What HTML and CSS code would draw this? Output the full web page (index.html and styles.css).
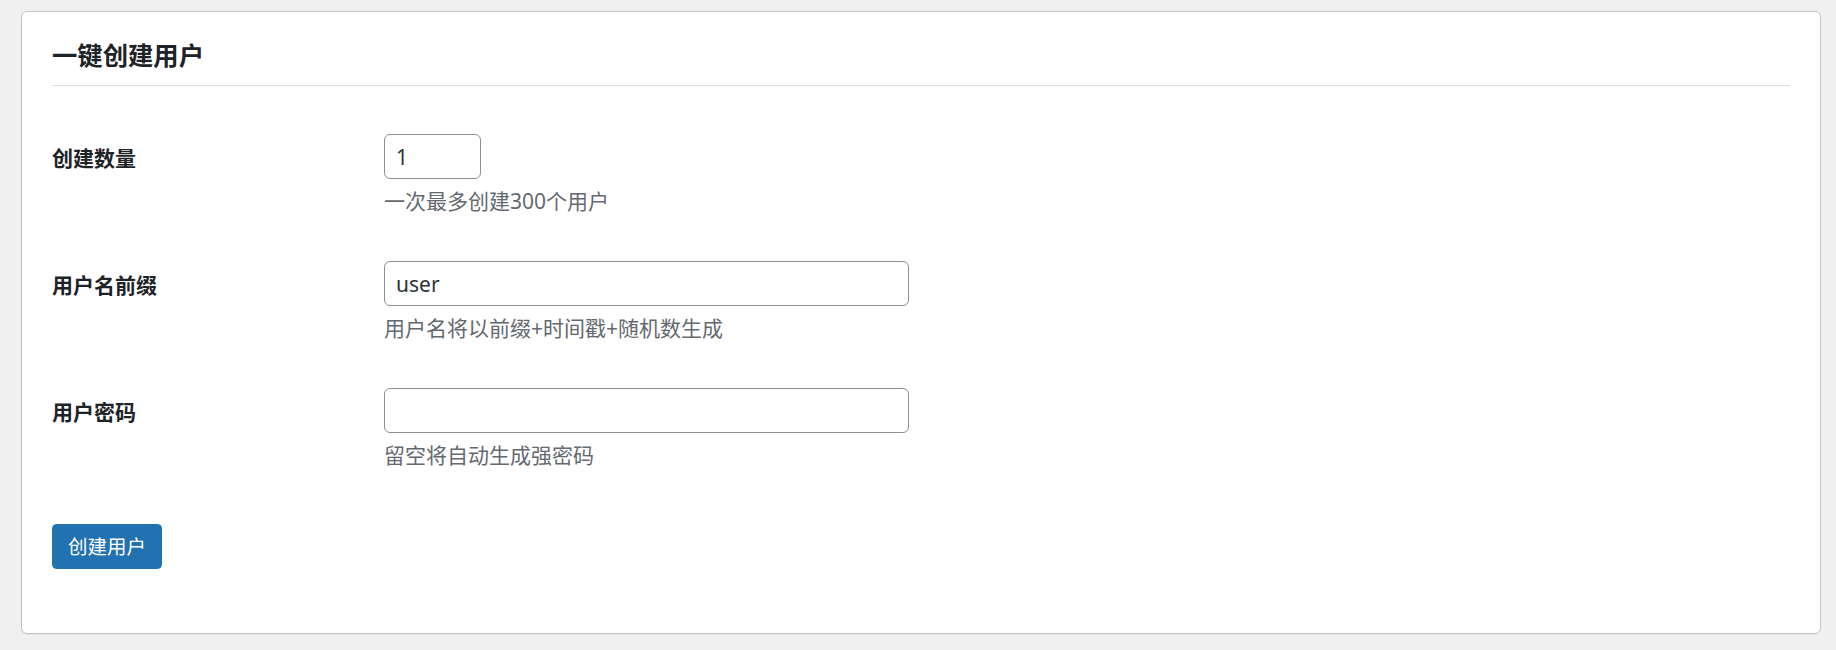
FILE: index.html
```html
<!DOCTYPE html>
<html lang="zh-CN">
<head>
<meta charset="utf-8">
<title>一键创建用户</title>
<link rel="stylesheet" href="styles.css">
</head>
<body>
<div class="wrap">
  <div class="card">
    <h2 class="card-title">一键创建用户</h2>
    <form class="form">
      <div class="row">
        <label class="label" for="count">创建数量</label>
        <div class="field">
          <input class="input input-small" id="count" type="number" value="1">
          <p class="desc">一次最多创建300个用户</p>
        </div>
      </div>
      <div class="row">
        <label class="label" for="prefix">用户名前缀</label>
        <div class="field">
          <input class="input input-regular" id="prefix" type="text" value="user">
          <p class="desc">用户名将以前缀+时间戳+随机数生成</p>
        </div>
      </div>
      <div class="row">
        <label class="label" for="pass">用户密码</label>
        <div class="field">
          <input class="input input-regular" id="pass" type="password" value="">
          <p class="desc">留空将自动生成强密码</p>
        </div>
      </div>
      <div class="submit">
        <button class="button" type="button">创建用户</button>
      </div>
    </form>
  </div>
</div>
</body>
</html>
```

FILE: styles.css
```css
html, body {
  margin: 0;
  padding: 0;
  background: #f0f0f1;
}

body {
  font-family: "Noto Sans", "Noto Sans CJK SC", sans-serif;
  color: #3c434a;
}

.wrap {
  padding: 11px 15px 15px 21px;
}

.card {
  background: #fff;
  border: 1px solid #c3c4c7;
  border-radius: 6px;
  box-shadow: 0 1px 1px rgba(0, 0, 0, 0.04);
  padding: 27px 30px 30px 30px;
}

.card-title {
  margin: 0;
  font-size: 25.35px;
  line-height: 33px;
  font-weight: 700;
  color: #1d2327;
  padding-bottom: 13px;
  border-bottom: 1px solid #dcdcde;
}

.form {
  margin: 0;
  padding-top: 25px;
}

.row {
  display: grid;
  grid-template-columns: 332px 1fr;
  padding: 23px 0 22px 0;
}

.label {
  font-size: 21px;
  line-height: 27px;
  font-weight: 700;
  color: #1d2327;
  padding-top: 11px;
}

.field {
  display: flex;
  flex-direction: column;
  align-items: flex-start;
}

.input {
  box-sizing: border-box;
  height: 45px;
  margin: 0;
  padding: 0 11px;
  border: 1px solid #8c8f94;
  border-radius: 6px;
  background: #fff;
  color: #2c3338;
  font-family: "Noto Sans", "Noto Sans CJK SC", sans-serif;
  font-size: 21px;
  outline: none;
  -moz-appearance: textfield;
  appearance: textfield;
}

.input::-webkit-outer-spin-button,
.input::-webkit-inner-spin-button {
  -webkit-appearance: none;
  margin: 0;
}

.input-small {
  width: 97px;
}

.input-regular {
  width: 525px;
}

.desc {
  margin: 8px 0 0 0;
  font-size: 21px;
  line-height: 29px;
  color: #646970;
}

.submit {
  margin-top: 32px;
  margin-bottom: 34px;
}

.button {
  box-sizing: border-box;
  height: 45px;
  padding: 0 15px;
  border: 1px solid #2271b1;
  border-radius: 4.5px;
  background: #2271b1;
  color: #fff;
  font-family: "Noto Sans", "Noto Sans CJK SC", sans-serif;
  font-size: 19.5px;
  line-height: 43px;
  cursor: pointer;
}
```
